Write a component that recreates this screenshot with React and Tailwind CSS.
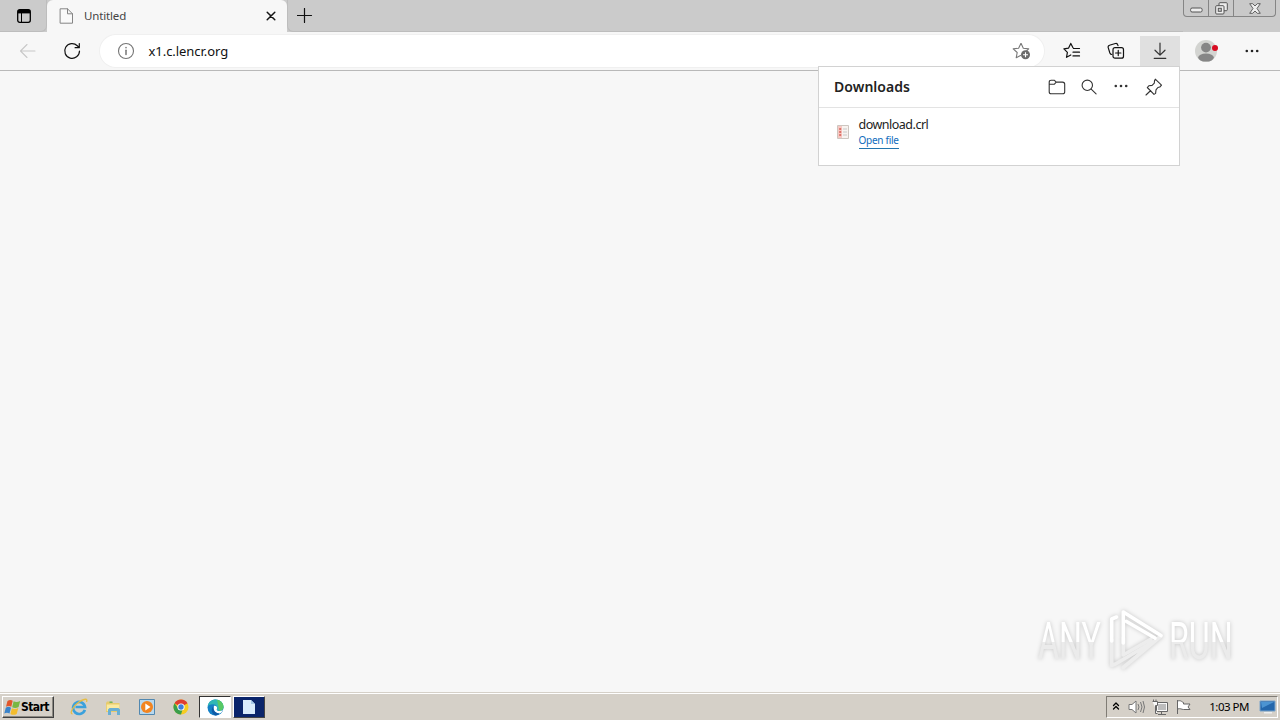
import React from "react";

const ICON = { fill: "none", stroke: "currentColor", strokeLinecap: "round", strokeLinejoin: "round" };

function Icon({ className = "", size = 18, children, stroke = 1.1 }) {
  return (
    <svg {...ICON} className={"shrink-0 " + className} width={size} height={size} viewBox={`0 0 ${size} ${size}`} strokeWidth={stroke}>
      {children}
    </svg>
  );
}

function Dots({ className = "" }) {
  return (
    <svg className={className} width="16" height="16" viewBox="0 0 16 16" fill="currentColor">
      <circle cx="2.8" cy="8" r="1.3" /><circle cx="8" cy="8" r="1.3" /><circle cx="13.2" cy="8" r="1.3" />
    </svg>
  );
}

function TabStrip() {
  return (
    <div className="flex h-8 shrink-0 items-start bg-[#cbcbcb]">
      <div className="flex h-8 w-[47px] items-center justify-center rounded-br-md border-b border-r border-[#bdbdbd] pl-[2px]">
        <svg width="14" height="14" viewBox="0 0 14 14">
          <rect x=".7" y=".7" width="12.6" height="12.6" rx="2" fill="none" stroke="#000" strokeWidth="1.3" />
          <path d="M1 1h12v3.4H1z" fill="#000" /><path d="M4.5 4v9" stroke="#000" />
        </svg>
      </div>
      <div className="flex h-8 w-[240px] items-center rounded-t-md bg-[#f7f7f7] pl-[12px] pr-[11px]">
        <Icon size={16} className="text-[#858585]" stroke={1}>
          <path d="M1.5 .8h7l5 5v9.4h-12z M8.5 .8v5h5" fill="#fafafa" />
        </Icon>
        <span className="ml-[9px] whitespace-nowrap font-['Noto_Sans',sans-serif] text-[11.5px] leading-4 tracking-[-0.15px] text-[#444]">Untitled</span>
        <Icon size={10} className="ml-auto text-[#151515]" stroke={1.5}><path d="M1.2 1.2l7.6 7.6M8.8 1.2L1.2 8.8" /></Icon>
      </div>
      <div className="flex h-8 flex-1 items-center rounded-bl-md border-b border-l border-[#bdbdbd] pl-[9px]">
        <Icon size={16} className="text-[#111]" stroke={1.2}><path d="M7.5 .5v14M.5 7.500h14" /></Icon>
      </div>
      <div className="mr-1 flex h-[17px] w-[93px] rounded-b-[4px] border border-t-0 border-[#858585] bg-[#c9c9c9]">
        <div className="flex w-[25px] items-center justify-center border-r border-[#858585] pt-1">
          <svg width="13" height="6" viewBox="0 0 13 6"><rect x=".6" y="1" width="11.5" height="4" rx="1.5" fill="#eee" stroke="#555" /></svg>
        </div>
        <div className="flex w-[25px] items-center justify-center border-r border-[#858585]">
          <svg width="13" height="13" viewBox="0 0 13 13" fill="#ededed" stroke="#555">
            <rect x="4" y=".7" width="8.3" height="8" rx="1" /><rect x=".7" y="3.7" width="8.3" height="8.3" rx="1" /><rect x="3.3" y="6.3" width="3" height="3" fill="#ccc" />
          </svg>
        </div>
        <div className="flex flex-1 items-center justify-center">
          <svg width="12" height="11" viewBox="0 0 12 11"><path d="M.7 .7h3L6 3 8.300.7h3L8 5.500l3.300 4.800h-3L6 8 3.700 10.300h-3L4 5.500z" fill="#eee" stroke="#555" strokeWidth=".9" strokeLinejoin="round" /></svg>
        </div>
      </div>
    </div>
  );
}

function Toolbar() {
  return (
    <div className="flex h-[39px] shrink-0 items-center border-b border-[#b9b9b9] bg-[#f7f7f7] pl-2 pr-2">
      <button className="flex size-10 items-center justify-center text-[#c8c8c8]">
        <Icon stroke={1.1}><path d="M16 9H1.500M8 2.500L1.500 9 8 15.500" /></Icon>
      </button>
      <button className="ml-1 flex size-10 items-center justify-center text-[#111]">
        <Icon stroke={1.2}><path d="M16.500 9a7.400 7.400 0 1 1-2.200-5.300l2 2M16.300 1.500v4.200h-4.200" /></Icon>
      </button>
      <div className="ml-2 flex h-8 w-[944px] items-center rounded-full bg-white pl-[17px] pr-[13px] shadow-[0_0_0_1px_#f0f0f0]">
        <Icon size={18} className="text-[#757575]" stroke={1.1}><circle cx="9" cy="9" r="7.500" /><path d="M9 8.300v4.200" strokeWidth="1.500" /><path d="M9 5.400v.3" strokeWidth="1.500" /></Icon>
        <span className="ml-[13.500px] whitespace-nowrap font-['Noto_Sans',sans-serif] text-[13px] leading-[18px] tracking-[-0.05px] text-[#111]">x1.c.lencr.org</span>
        <svg className="ml-auto" width="19" height="18" viewBox="0 0 19 18" fill="none" stroke="#777" strokeWidth="1.100" strokeLinejoin="round">
          <path d="M9 1.300l2.300 4.900 5.400.7-3.900 3.800M9 13.300l-4.800 2.500 1-5.300L1.200 6.900l5.400-.7L9 1.300" />
          <circle cx="13.500" cy="12.800" r="4.500" fill="#6a6a6a" stroke="none" /><path d="M13.500 10.300v5M11 12.800h5" stroke="#fff" />
        </svg>
      </div>
      <button className="ml-2 flex size-10 items-center justify-center text-[#111]">
        <Icon stroke={1.200}><path d="M10 5.700L7.800 1.400 5.600 6.100.9 6.800l3.500 3.500-.9 5 4.300-2.300M10.500 6.500H16.500M10 10.200h6.500M10 13.900h6.500" /></Icon>
      </button>
      <button className="ml-1 flex size-10 items-center justify-center text-[#111]">
        <Icon stroke={1.200}><rect x="6" y="5.700" width="10.500" height="10.500" rx="2" /><path d="M11.250 8.400v5.200M8.600 11h5.300M4.800 12.500c-1 0-1.500-.5-1.900-1.500L1.200 5.600c-.3-1 .1-2 1.200-2.300l6-1.800c1-.3 2 .2 2.300 1.200l.3.900" /></Icon>
      </button>
      <button className="ml-1 mt-[1px] flex h-[31px] w-10 items-center justify-center bg-[#e0e0e0] text-[#333]">
        <Icon className="-mt-px" stroke={1.200}><path d="M9 1v12M4 8.200L9 13.100l5-4.900M3.200 16.300h11.600" /></Icon>
      </button>
      <div className="ml-[6px] flex size-10 items-center justify-center">
        <svg width="24" height="24" viewBox="0 0 24 24">
          <circle cx="12" cy="12" r="11" fill="#d3d4d1" /><circle cx="12" cy="8.600" r="4.900" fill="#868686" />
          <ellipse cx="12" cy="18.600" rx="7.800" ry="4" fill="#868686" /><circle cx="21" cy="9" r="3" fill="#d80c22" />
        </svg>
      </div>
      <button className="ml-[6px] flex size-10 items-center justify-center text-[#222]"><Dots /></button>
    </div>
  );
}

function Downloads() {
  return (
    <section className="absolute left-[818px] top-[66px] h-[100px] w-[362px] border border-[#d2d2d2] bg-white font-['Noto_Sans',sans-serif] text-[#222]">
      <header className="flex h-[41px] items-center border-b border-[#e3e3e3] pl-[15px] pr-4">
        <h1 className="whitespace-nowrap font-['Noto_Sans',sans-serif] text-[14px] font-semibold leading-5 tracking-[0.05px]">Downloads</h1>
        <div className="ml-auto flex items-center text-[#333]">
          <Icon className="mr-[14px]"><path d="M1.200 4.200c0-1.300.7-2 2-2h3l2 1.900h6.300c1.400 0 2.200.8 2.200 2.200v7.400c0 1.300-.8 2.100-2.200 2.100H3.300c-1.300 0-2.100-.8-2.100-2.100zM1.200 6.300h5l2-2.200" /></Icon>
          <Icon className="mr-[14px]"><circle cx="7.300" cy="7.300" r="5.200" /><path d="M11.200 11.200l4.900 4.700" /></Icon>
          <div className="mr-[15px] flex w-[18px] justify-center"><Dots className="-mt-[2px]" /></div>
          <Icon><path d="M10.300 1.200l6.200 6-1.700 1.800-1.900.5-1.900 2.300-.4 3.600-1.600 1L2.300 9.500l1.500-1.700 3.300-.4 2.200-2.200.2-2.500zM5.700 12.500L1 17" /></Icon>
        </div>
      </header>
      <div className="flex items-start pl-[18px] pt-2">
        <svg className="mt-[9px]" width="12" height="14" viewBox="0 0 12 14">
          <path d="M.5 .5h11v13H.5z" fill="#f8f3f0" stroke="#cdc6c0" /><path d="M1 1h4v12H1z" fill="#f7c8c3" />
          <path d="M2.200 4h2M2.200 7h2M2.200 10h2" stroke="#d3574c" strokeWidth="1.500" /><path d="M6 4h4M6 7h4M6 10h4" stroke="#c8c8c8" />
        </svg>
        <div className="ml-[9.500px] flex flex-col items-start">
          <span className="whitespace-nowrap text-[12.500px] leading-[17px] tracking-[-0.500px]">download.crl</span>
          <a className="whitespace-nowrap border-b border-[#2375ae] pb-px text-[10px] leading-[14px] tracking-[-0.270px] text-[#0f6cbd]">Open file</a>
        </div>
      </div>
    </section>
  );
}

function Watermark() {
  return (
    <div className="absolute left-[1038px] top-[608px] flex h-[66px] w-[196px] items-center font-['Roboto',sans-serif] drop-shadow-[0_0_2px_rgba(0,0,0,0.2)]">
      <span className="w-[69px] whitespace-nowrap pt-[2px] text-[52px] leading-none"><span className="inline-block origin-left scale-x-[0.62] bg-linear-to-b from-white from-50% to-[#ebebeb] to-50% bg-clip-text text-transparent">ANY</span></span>
      <svg className="shrink-0" width="62" height="66" viewBox="0 0 62 66" fill="none" strokeLinejoin="round" strokeLinecap="round">
        <path d="M4.700 32v25.500L8.500 56 50 31.500M16.300 30v17L44 31M54 28L16.300 59.500" stroke="#ededed" strokeWidth="3.600" />
        <path d="M9.500 9l-4.800 2v22M16.300 35V4L54 27.500M19.500 13.500L48 30" stroke="#fff" strokeWidth="3.600" />
      </svg>
      <span className="w-[65px] whitespace-nowrap pt-[2px] text-[52px] leading-none"><span className="inline-block origin-left scale-x-[0.62] bg-linear-to-b from-white from-50% to-[#ebebeb] to-50% bg-clip-text text-transparent">RUN</span></span>
    </div>
  );
}

function WindowsFlag() {
  return (
    <svg className="shrink-0" width="17" height="17" viewBox="0 0 17 17">
      <path d="M3.500 2c2-1.500 4-1.200 5.200-.2L7.300 7.700C5.500 6.600 3.700 6.700 2 7.700z" fill="#e2562a" /><path d="M9.600 2.300c2 1.200 4.200 1 6.600-.3L14.600 8c-2 1.200-4.400 1.300-6.400.2z" fill="#79b743" />
      <path d="M1.800 8.700c2-1.200 3.600-1 5.200 0L5.500 14.500c-1.800-1.200-3.500-1-5.200 0z" fill="#3a83ca" /><path d="M7.900 9.200c2 1.200 4.300 1 6.400-.2l-1.600 6c-2.200 1.200-4.400 1.100-6.300 0z" fill="#f4bd2d" />
    </svg>
  );
}

function Taskbar() {
  return (
    <footer className="flex h-[27px] shrink-0 items-center border-t border-[#fff] bg-[#d5d0c8] pl-[2px] pr-[2px]">
      <button className="flex h-[22px] w-[52px] items-center border border-b-[#404040] border-l-white border-r-[#404040] border-t-white pl-px shadow-[inset_-1px_-1px_0_#8c8982]">
        <WindowsFlag />
        <span className="whitespace-nowrap font-['DejaVu_Sans_Condensed','DejaVu_Sans',sans-serif] text-[12px] font-bold leading-4 tracking-[-0.6px] text-black">Start</span>
      </button>
      <div className="ml-[8px] flex items-center">
        <div className="flex w-[34px] justify-center">
          <svg width="18" height="18" viewBox="0 0 18 18" fill="none">
            <path d="M14.800 11.800A6 6 0 1 1 15 9H5.500" stroke="#3ba1dc" strokeWidth="2.700" /><path d="M2.500 15.800C-1 16 3 8 9 4s9-3.300 7.500 0" stroke="#e6bd44" strokeWidth="1.300" />
          </svg>
        </div>
        <div className="flex w-[34px] justify-center">
          <svg width="17" height="17" viewBox="0 0 17 17"><path d="M1 4l1-1.500h5l1 1.500h6.500v9H1z" fill="#e7cb6d" /><path d="M1.800 5.500h12.500V12H1.800z" fill="#faeaa0" /><path d="M3 16v-5.500L4.500 9h9l1.500 1.500V16h-3v-4H6v4z" fill="#69afd3" /><path d="M4.500 2.500h3v1.500h-3z" fill="#72b45c" /></svg>
        </div>
        <div className="flex w-[34px] justify-center">
          <svg width="16" height="16" viewBox="0 0 16 16"><path d="M.5 .5h15v15H.5z" fill="#b8d8ee" stroke="#5288b0" /><circle cx="8" cy="8" r="6" fill="#f28420" /><path d="M6.300 4.500v7L11.500 8z" fill="#fff" /></svg>
        </div>
        <div className="flex w-[34px] justify-center">
          <svg width="16" height="16" viewBox="0 0 16 16"><circle cx="8" cy="8" r="7.500" fill="#f6cc22" /><path d="M8 8L1.500 4.200a7.500 7.500 0 0 1 13 0z" fill="#df3d31" /><path d="M1.500 4.200A7.500 7.500 0 0 0 8 15.500L10 9 5 9z" fill="#3a9e4b" /><circle cx="8" cy="8" r="3.600" fill="#fff" /><circle cx="8" cy="8" r="2.700" fill="#3f7edb" /></svg>
        </div>
        <div className="ml-px flex h-[22px] w-8 items-center justify-center border border-b-white border-l-[#333] border-r-white border-t-[#333] bg-white">
          <svg width="17" height="17" viewBox="0 0 17 17">
            <circle cx="8.500" cy="8.500" r="8" fill="#1480c6" />
            <path d="M.6 7.500C1.500 2.500 5 .5 8.500 .5c5 0 8 3.800 8 7.300 0 3-2.300 4-4.200 4-2 0-2.800-.8-2.500-1.300C11 9 9.500 5.300 6 5.300 3 5.300 1 6.500 .6 7.500z" fill="#30b7b5" />
            <path d="M10 .7c4.200.8 6.500 4 6.500 7 0 3-2.300 4.100-4.200 4.100z" fill="#58c965" />
            <path d="M6.800 7c1.800-.6 3.500.5 3.300 2.200-.2 1-.6 1.200-.3 1.700 1.200 1.700 4.200 1.400 6.200 0-.8 2-2 3-3.200 3.500C9 15 5.500 11 6.800 7z" fill="#fff" />
            <path d="M6.800 7c-1.300 4 1.500 7.500 5.500 7.400-1.500 1.500-3 2.100-4.300 2C4.500 14.500 3.500 9.500 6.800 7z" fill="#0f5ba6" />
          </svg>
        </div>
        <div className="ml-[2px] flex h-[22px] w-8 items-center justify-center border border-b-[#444] border-l-white border-r-[#444] border-t-white bg-[#0a246a]">
          <svg width="12" height="16" viewBox="0 0 12 16"><path d="M0 1h8l4 4v10H0z" fill="#d9ebfb" /><path d="M8 1v4h4" fill="#a5c8e7" /></svg>
        </div>
      </div>
      <div className="ml-auto flex h-[22px] w-[172px] items-center border border-b-white border-l-[#807c75] border-r-white border-t-[#807c75] pl-[5px] pr-px">
        <Icon size={8} className="-mt-[2px] text-black" stroke={1.300}><path d="M1.500 3.500L4 1l2.500 2.500M1.500 7L4 4.500 6.500 7" /></Icon>
        <svg className="ml-[8px]" width="18" height="16" viewBox="0 0 18 16" fill="none" stroke="#777"><path d="M1 5.500h3L8 2v12l-4-3.500H1z" fill="#fff" /><path d="M10 5q2 3 0 6M12.500 3q3 5 0 10M15 2q3 6 0 12" /></svg>
        <svg className="ml-[5px]" width="18" height="17" viewBox="0 0 18 17" fill="#f8f8f8" stroke="#666"><path d="M5.500 3.500h11v9h-11z" /><path d="M7 5h8v6H7z" fill="#bcbcbc" stroke="none" /><path d="M10.500 12.500v3M7 15.500h8M1.500 2.500h5v4h-2v8h2M2.500 .5v2M5 .5v2" /></svg>
        <svg className="ml-[6px]" width="17" height="16" viewBox="0 0 17 16" fill="#fff" stroke="#666"><path d="M2.500 15V1" /><path d="M2.500 2c4-1 4 1 6 1.500v1.500h6.500l-2 3 2 2.500H8.500c-2 0-3-1.500-6-.5z" /></svg>
        <span className="ml-auto mr-[10px] whitespace-nowrap font-['Noto_Sans',sans-serif] text-[11.500px] leading-4 tracking-[-0.5px] text-black">1:03 PM</span>
        <svg width="17" height="14" viewBox="0 0 17 14"><path d="M1 1h15v10H1z" fill="#2467ac" stroke="#7ba4ca" /><path d="M2 2h13L3 8z" fill="#4c94d2" /><path d="M5 12h8v1.500H5z" fill="#eee" /></svg>
      </div>
    </footer>
  );
}

export default function App() {
  return (
    <div className="relative flex h-[720px] w-[1280px] flex-col overflow-hidden bg-[#f7f7f7]">
      <TabStrip />
      <Toolbar />
      <main className="flex-1 border-b border-[#d5d0c8]" />
      <Taskbar />
      <Downloads />
      <Watermark />
    </div>
  );
}
